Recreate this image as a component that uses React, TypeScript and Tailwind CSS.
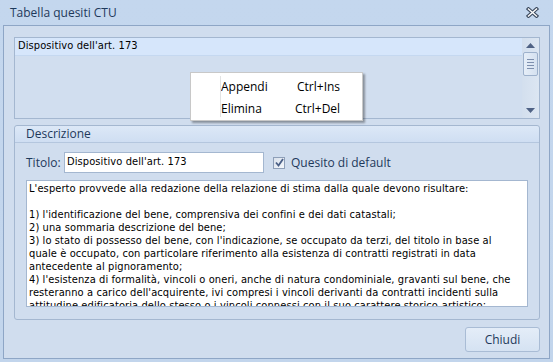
import React from "react";

const ui = { fontFamily: '"Open Sans", "Noto Sans", sans-serif' } as const;
const tah = { fontFamily: '"DejaVu Sans Condensed", "DejaVu Sans", sans-serif' } as const;

const lines = [
  "L'esperto provvede alla redazione della relazione di stima dalla quale devono risultare:",
  "",
  "1) l'identificazione del bene, comprensiva dei confini e dei dati catastali;",
  "2) una sommaria descrizione del bene;",
  "3) lo stato di possesso del bene, con l'indicazione, se occupato da terzi, del titolo in base al",
  "quale è occupato, con particolare riferimento alla esistenza di contratti registrati in data",
  "antecedente al pignoramento;",
  "4) l'esistenza di formalità, vincoli o oneri, anche di natura condominiale, gravanti sul bene, che",
  "resteranno a carico dell'acquirente, ivi compresi i vincoli derivanti da contratti incidenti sulla",
  "attitudine edificatoria dello stesso o i vincoli connessi con il suo carattere storico-artistico;",
];

function CloseX() {
  return (
    <svg width="13" height="11" viewBox="0 0 13 11">
      <g strokeLinecap="square">
        <line x1="2.5" y1="2" x2="10.5" y2="9" stroke="#3c4a5e" strokeWidth="3.6" />
        <line x1="10.5" y1="2" x2="2.5" y2="9" stroke="#3c4a5e" strokeWidth="3.6" />
        <line x1="2.5" y1="2" x2="10.5" y2="9" stroke="#ffffff" strokeWidth="1.4" />
        <line x1="10.5" y1="2" x2="2.5" y2="9" stroke="#ffffff" strokeWidth="1.4" />
      </g>
    </svg>
  );
}

export default function App() {
  return (
    <div className="relative w-[553px] h-[362px] bg-gradient-to-b from-[#c4d7ee] to-[#c2d5ec] flex flex-col overflow-hidden" style={ui}>
      {/* title bar */}
      <div className="h-[25px] flex items-center justify-between pl-[10px] pr-[14px] shrink-0">
        <span className="text-[12px] text-[#1e395b] leading-none">Tabella quesiti CTU</span>
        <CloseX />
      </div>

      {/* client area */}
      <div className="mx-[3px] mb-[3px] flex-1 border border-[#8ea6c6] bg-[#d0ddee] flex flex-col pl-[10px] pr-[9px] pt-[11px]">
        {/* list box */}
        <div className="h-[82px] border border-[#a4b7d0] bg-[#d1deef] flex shrink-0">
          <div className="flex-1">
            <div className="h-[18px] bg-[#d6e6fb] border-b border-[#c5d8f0] flex items-center pl-[3px] text-[11px] tracking-[0.1px] text-black" style={tah}>
              Dispositivo dell'art. 173
            </div>
          </div>
          <div className="w-[17px] bg-gradient-to-r from-[#d3dfee] to-[#dce6f2] flex flex-col items-center pt-[5px] pb-[5px]">
            <svg width="9" height="5" viewBox="0 0 9 5"><path d="M0 5 L4.5 0 L9 5 Z" fill="#4f6285" /></svg>
            <div className="mt-[4px] w-[15px] h-[24px] rounded-[2px] border border-[#9db1cc] bg-gradient-to-r from-[#e6eef8] to-[#d5e1f0] flex flex-col items-center justify-center gap-[2px]">
              <div className="w-[7px] h-px bg-[#7d8fae]" />
              <div className="w-[7px] h-px bg-[#7d8fae]" />
              <div className="w-[7px] h-px bg-[#7d8fae]" />
              <div className="w-[7px] h-px bg-[#7d8fae]" />
            </div>
            <div className="flex-1" />
            <svg width="9" height="5" viewBox="0 0 9 5"><path d="M0 0 L4.5 5 L9 0 Z" fill="#4f6285" /></svg>
          </div>
        </div>

        {/* group box */}
        <div className="mt-[6px] h-[195px] border border-[#a4b7d0] rounded-[3px] flex flex-col shrink-0">
          <div className="h-[17px] bg-gradient-to-b from-[#dce8f7] to-[#cfdef2] border-b border-[#b4c6de] flex items-center pl-[11px] text-[12px] text-[#1e395b] rounded-t-[3px]">
            Descrizione
          </div>
          <div className="flex items-center mt-[9px] pl-[11px] h-[21px]">
            <span className="text-[12px] text-[#1e395b] w-[38px]">Titolo:</span>
            <div className="w-[200px] h-[21px] border border-[#a4b7d0] bg-white flex items-center pl-[2px] text-[11px] tracking-[0.1px] text-black" style={tah}>
              Dispositivo dell'art. 173
            </div>
            <div className="ml-[9px] w-[12px] h-[12px] border border-[#8e9fb8] bg-gradient-to-br from-[#d9e1ec] to-[#f4f7fb] flex items-center justify-center">
              <svg width="9" height="9" viewBox="0 0 9 9"><path d="M1 4.5 L3.5 7.5 L8 1" fill="none" stroke="#4a5f86" strokeWidth="1.8" /></svg>
            </div>
            <span className="ml-[6px] text-[12px] text-[#1e395b]">Quesito di default</span>
          </div>
          <div className="mt-[7px] mx-[11px] h-[127px] border border-[#a4b7d0] bg-white overflow-hidden pt-px pl-[2px] text-[11px] tracking-[0.1px] leading-[13px] text-black" style={tah}>
            {lines.map((l, i) => (
              <div key={i} className="whitespace-pre h-[13px]">{l || " "}</div>
            ))}
          </div>
        </div>

        {/* button row */}
        <div className="flex justify-end mt-[7px]">
          <div className="w-[75px] h-[25px] rounded-[3px] border border-[#a9bcd5] bg-gradient-to-b from-[#e4edf8] to-[#d5e2f2] flex items-center justify-center text-[12px] text-[#1e395b]">
            Chiudi
          </div>
        </div>
      </div>

      {/* context menu */}
      <div className="absolute left-[190px] top-[72px] w-[173px] h-[49px] bg-white border border-[#c8c8c8] shadow-[2px_2px_2px_rgba(0,0,0,0.35)]">
        <div className="absolute left-[29px] top-[3px] bottom-[3px] w-px bg-[#e2e3e3]" />
        <div className="h-[22px] mt-[3px] flex items-center text-[12px] text-black">
          <span className="pl-[30px] w-[106px]">Appendi</span>
          <span>Ctrl+Ins</span>
        </div>
        <div className="h-[22px] flex items-center text-[12px] text-black">
          <span className="pl-[30px] w-[104px]">Elimina</span>
          <span>Ctrl+Del</span>
        </div>
      </div>
    </div>
  );
}
